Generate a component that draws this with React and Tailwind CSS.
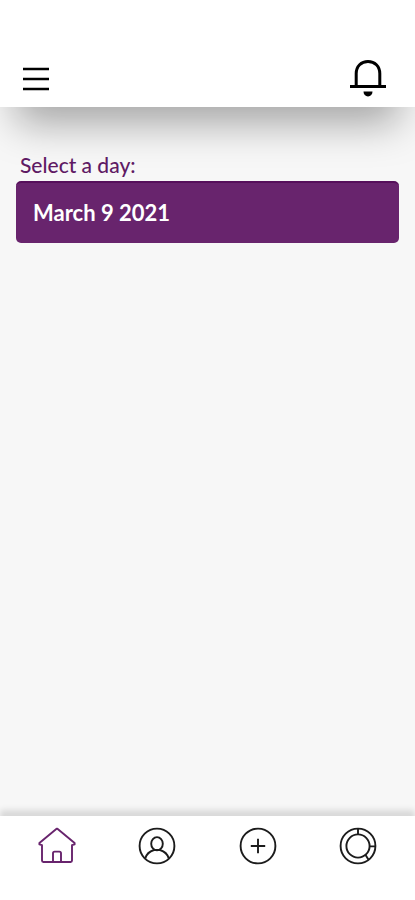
import { useState } from "react";

function MenuIcon() {
  return (
    <svg width="26" height="26" viewBox="0 0 26 26" stroke="#000" strokeWidth="2.5" aria-hidden="true">
      <path d="M0 4H26M0 14H26M0 24H26" />
    </svg>
  );
}

function BellIcon() {
  return (
    <svg width="36" height="38" viewBox="0 0 36 38" fill="none" aria-hidden="true">
      <path d="M6.2 27V14.5C6.2 7.2 11.3 2.4 18 2.4S29.8 7.2 29.8 14.5V27" stroke="#000" strokeWidth="3" />
      <path d="M0 27.5H36" stroke="#000" strokeWidth="3.2" />
      <path d="M13.5 32.6H22.5C22.5 35.6 20.6 37.4 18 37.4S13.5 35.6 13.5 32.6Z" fill="#000" />
    </svg>
  );
}

function HomeIcon() {
  return (
    <svg className="size-9 overflow-visible" viewBox="0 0 36 36" fill="none" stroke="currentColor" strokeWidth="1.9" strokeLinejoin="round" strokeLinecap="round" aria-hidden="true">
      <path d="M3 17.2L0.4 16.4V15L17.6 0.8H18.4L35.6 15V16.4L33 17.2V32.6Q33 34 31.6 34H4.4Q3 34 3 32.6Z" />
      <path d="M14 34V25.2Q14 23.6 15.6 23.6H20.4Q22 23.6 22 25.2V34" />
    </svg>
  );
}

function ProfileIcon() {
  return (
    <svg className="size-9 overflow-visible" viewBox="0 0 36 36" fill="none" stroke="currentColor" strokeWidth="1.9" aria-hidden="true">
      <circle cx="18" cy="18" r="17.4" />
      <ellipse cx="18" cy="15.7" rx="5.8" ry="6.6" />
      <path d="M6.3 30.3C7.5 26 11 23.2 15 22H21C25 23.2 28.5 26 29.7 30.3" />
    </svg>
  );
}

function AddIcon() {
  return (
    <svg className="size-9 overflow-visible" viewBox="0 0 36 36" fill="none" stroke="currentColor" strokeWidth="1.9" aria-hidden="true">
      <circle cx="18" cy="18" r="17.4" />
      <path d="M18 10.8V25.2M10.8 18H25.2" />
    </svg>
  );
}

function StatsIcon() {
  return (
    <svg className="size-9 overflow-visible" viewBox="0 0 36 36" fill="none" stroke="currentColor" strokeWidth="1.9" aria-hidden="true">
      <circle cx="18" cy="18" r="17.4" />
      <circle cx="18" cy="18" r="11.6" />
      <path d="M18 0.6V6.6M29.4 18.4H35.4M25.4 26.8L28.4 31.6" />
    </svg>
  );
}

const tabs = [
  { id: "home", label: "Home", Icon: HomeIcon },
  { id: "profile", label: "Profile", Icon: ProfileIcon },
  { id: "add", label: "Add", Icon: AddIcon },
  { id: "stats", label: "Statistics", Icon: StatsIcon },
];

function App() {
  const [activeTab, setActiveTab] = useState("home");

  return (
    <div className="min-h-dvh flex flex-col overflow-x-hidden bg-[#f7f7f7] font-[Lato,sans-serif]">
      {/* Top bar, padded for the status bar */}
      <header className="relative flex items-center justify-between bg-white pt-[59px] pb-[10px] pl-[23px] pr-[29px] shadow-[0_32px_40px_-16px_rgba(0,0,0,0.34)]">
        <button type="button" aria-label="Menu">
          <MenuIcon />
        </button>
        <button type="button" aria-label="Notifications">
          <BellIcon />
        </button>
      </header>

      <main className="relative flex-1 px-4 pt-11">
        <label htmlFor="day" className="block pl-1 text-[21px] leading-7 font-medium text-[#5f1a64]">
          Select a day:
        </label>
        <button
          id="day"
          type="button"
          className="mt-0.5 block w-full rounded-[5px] border-t-2 border-[#560f5b] bg-[#68246d] px-[17px] py-4 text-left text-[22px] leading-7 font-bold text-white"
        >
          March 9 2021
        </button>
      </main>

      <nav className="relative grid grid-cols-4 bg-white px-[7px] pt-3 pb-9 shadow-[0_-6px_6px_rgba(0,0,0,0.12)]">
        {tabs.map(({ id, label, Icon }) => (
          <button
            key={id}
            type="button"
            aria-label={label}
            onClick={() => setActiveTab(id)}
            className={`flex justify-center ${activeTab === id ? "text-[#68246d]" : "text-[#1c1c1c]"}`}
          >
            <Icon />
          </button>
        ))}
      </nav>
    </div>
  );
}

export default App;
